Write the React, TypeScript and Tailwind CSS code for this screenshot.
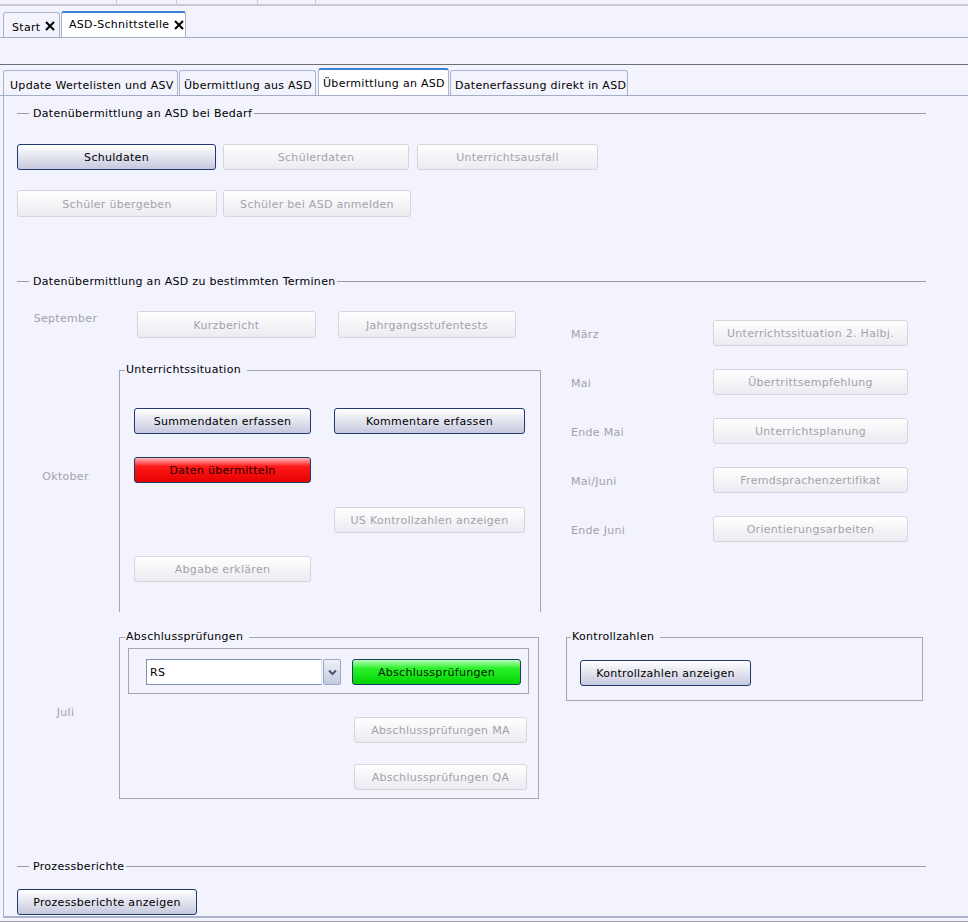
import React from 'react';

type Kind = 'active' | 'disabled' | 'red' | 'green';

const kinds: Record<Kind, string> = {
  active: 'border-[#1c3a6a] bg-linear-to-b from-[#ffffff] to-[#c6c9de] text-black',
  disabled: 'border-[#d4d5dd] bg-linear-to-b from-[#ffffff] to-[#ebebf1] text-[#a3a3aa]',
  red: 'border-[#1c3a6a] bg-[linear-gradient(#ffb8b8,#ff1a1a_35%,#e60000)] text-[#1a0000]',
  green: 'border-[#1c3a6a] bg-[linear-gradient(#b8ffb8,#2bf02b_35%,#00d400)] text-[#001a00]',
};

function Btn({ label, kind = 'disabled', className = '' }: { label: string; kind?: Kind; className?: string }) {
  return (
    <div
      className={`flex shrink-0 items-center justify-center rounded-[3px] border pt-[2px] ${kinds[kind]} ${className}`}
    >
      {label}
    </div>
  );
}

function CloseX() {
  return (
    <svg width="10" height="10" viewBox="0 0 10 10" className="shrink-0">
      <path d="M1 1 L9 9 M9 1 L1 9" stroke="#000" strokeWidth="2" />
    </svg>
  );
}

function Section({ title }: { title: string }) {
  return (
    <div className="flex h-[14px] items-center">
      <div className="h-px w-[12px] bg-[#9c9ca6]" />
      <span className="ml-[4px] mr-[2px] pt-[2px] text-black">{title}</span>
      <div className="h-px flex-1 bg-[#9c9ca6]" />
    </div>
  );
}

function Legend({ title }: { title: string }) {
  return (
    <div className="-mt-[8px] ml-[5px] w-fit bg-[#f2f3fd] pl-[1px] pr-[6px] leading-[14px] text-black">
      {title}
    </div>
  );
}

const months = [
  { m: 'März', b: 'Unterrichtssituation 2. Halbj.' },
  { m: 'Mai', b: 'Übertrittsempfehlung' },
  { m: 'Ende Mai', b: 'Unterrichtsplanung' },
  { m: 'Mai/Juni', b: 'Fremdsprachenzertifikat' },
  { m: 'Ende Juni', b: 'Orientierungsarbeiten' },
];

export default function App() {
  return (
    <div className="h-[922px] w-[968px] overflow-hidden bg-[#f2f3fd] font-['DejaVu_Sans',sans-serif] text-[11px] leading-[14px] tracking-[0.3px] text-black">
      {/* top strip */}
      <div className="flex h-[6px] border-b-2 border-[#c8c9d2]">
        <div className="w-[117px] border-r border-[#c8c9d2]" />
        <div className="w-[60px] border-r border-[#c8c9d2]" />
        <div className="w-[81px] border-r border-[#c8c9d2]" />
        <div className="w-[58px] border-r border-[#c8c9d2]" />
      </div>

      {/* outer tabs */}
      <div className="flex h-[32px] items-end border-b border-[#a3aec6] pl-[3px]">
        <div className="flex h-[25px] w-[57px] items-center gap-[5px] rounded-t-[3px] border border-b-0 border-[#a9b4cc] pl-[8px] pt-[5px]">
          <span>Start</span>
          <span className="-mt-[3px]">
            <CloseX />
          </span>
        </div>
        <div className="ml-[1px] flex h-[26px] w-[125px] items-center gap-[5px] rounded-t-[3px] border border-b-0 border-t-2 border-[#a9b4cc] border-t-[#3c7fd8] bg-white pb-[1px] pl-[7px]">
          <span>ASD-Schnittstelle</span>
          <CloseX />
        </div>
      </div>

      <div className="h-[27px] border-b border-[#6f6f79]" />

      {/* inner tabs */}
      <div className="flex h-[31px] items-end border-b border-[#a3aec6]">
        <div className="ml-[3px] flex h-[25px] w-[175px] items-center rounded-t-[3px] border border-b-0 border-[#a9b4cc] pl-[6px] pt-[5px]">
          Update Wertelisten und ASV
        </div>
        <div className="ml-[1px] flex h-[25px] w-[137px] items-center rounded-t-[3px] border border-b-0 border-[#a9b4cc] pl-[4px] pt-[5px]">
          Übermittlung aus ASD
        </div>
        <div className="ml-[2px] flex h-[27px] w-[131px] items-center rounded-t-[3px] border border-b-0 border-t-2 border-[#a9b4cc] border-t-[#3c7fd8] bg-white pl-[4px] pt-[2px]">
          Übermittlung an ASD
        </div>
        <div className="ml-[1px] flex h-[25px] w-[178px] items-center rounded-t-[3px] border border-b-0 border-[#a9b4cc] pl-[4px] pt-[5px]">
          Datenerfassung direkt in ASD
        </div>
      </div>

      {/* panel */}
      <div className="ml-[3px] h-[822px] border-b-2 border-l border-[#a9b4cc] pl-[13px] pr-[42px] pt-[10px]">
        <Section title="Datenübermittlung an ASD bei Bedarf" />

        <div className="mt-[24px] flex">
          <Btn label="Schuldaten" kind="active" className="h-[26px] w-[199px]" />
          <Btn label="Schülerdaten" className="ml-[7px] h-[26px] w-[186px]" />
          <Btn label="Unterrichtsausfall" className="ml-[8px] h-[26px] w-[181px]" />
        </div>
        <div className="mt-[20px] flex">
          <Btn label="Schüler übergeben" className="h-[27px] w-[200px]" />
          <Btn label="Schüler bei ASD anmelden" className="ml-[6px] h-[27px] w-[188px]" />
        </div>

        <div className="mt-[57px]">
          <Section title="Datenübermittlung an ASD zu bestimmten Terminen" />
        </div>

        <div className="mt-[23px] grid grid-cols-[524px_360px] gap-x-[25px]">
          {/* left, row A */}
          <div className="flex flex-col">
            <div className="flex items-start">
              <div className="w-[97px] pt-[1px] text-center text-[#a2a2aa]">September</div>
              <Btn label="Kurzbericht" className="ml-[23px] h-[27px] w-[179px]" />
              <Btn label="Jahrgangsstufentests" className="ml-[22px] h-[27px] w-[178px]" />
            </div>
            <div className="mt-[25px] flex items-start">
              <div className="w-[97px] pt-[107px] text-center text-[#a2a2aa]">Oktober</div>
              <div className="ml-[5px] mt-[7px] h-[242px] w-[422px] border border-b-0 border-[#a6a6b0]">
                <Legend title="Unterrichtssituation" />
                <div className="mt-[31px] flex">
                  <Btn label="Summendaten erfassen" kind="active" className="ml-[14px] h-[26px] w-[177px]" />
                  <Btn label="Kommentare erfassen" kind="active" className="ml-[23px] h-[26px] w-[191px]" />
                </div>
                <div className="mt-[23px] flex">
                  <Btn label="Daten übermitteln" kind="red" className="ml-[14px] h-[26px] w-[177px]" />
                </div>
                <div className="mt-[24px] flex">
                  <Btn label="US Kontrollzahlen anzeigen" className="ml-[214px] h-[26px] w-[191px]" />
                </div>
                <div className="mt-[23px] flex">
                  <Btn label="Abgabe erklären" className="ml-[14px] h-[26px] w-[177px]" />
                </div>
              </div>
            </div>
          </div>

          {/* right, row A */}
          <div className="mt-[9px] flex flex-col gap-[23px]">
            {months.map((r) => (
              <div key={r.m} className="flex h-[26px] items-center">
                <div className="w-[147px] pl-[5px] pt-[4px] text-[#a2a2aa]">{r.m}</div>
                <Btn label={r.b} className="h-[26px] w-[195px]" />
              </div>
            ))}
          </div>

          {/* left, row B */}
          <div className="mt-[18px] flex items-start">
            <div className="w-[97px] pt-[76px] text-center text-[#a2a2aa]">Juli</div>
            <div className="ml-[5px] mt-[7px] h-[162px] w-[420px] border border-[#a6a6b0]">
              <Legend title="Abschlussprüfungen" />
              <div className="ml-[8px] mt-[4px] flex h-[46px] w-[401px] border border-[#a6a6b0] pl-[17px] pt-[10px]">
                <div className="flex h-[26px] w-[176px] items-center border border-[#7f92b4] border-r-[#dfe3ee] bg-white pl-[3px] pt-[1px]">
                  RS
                </div>
                <div className="ml-[1px] flex h-[26px] w-[18px] items-center justify-center rounded-[2px] border border-[#9aa8c4] bg-linear-to-b from-[#eef1f9] to-[#c3cadf]">
                  <svg width="9" height="7" viewBox="0 0 9 7">
                    <path d="M1 1.5 L4.5 5 L8 1.5" stroke="#45587a" strokeWidth="2" fill="none" />
                  </svg>
                </div>
                <Btn label="Abschlussprüfungen" kind="green" className="ml-[11px] h-[26px] w-[169px]" />
              </div>
              <div className="mt-[23px] flex">
                <Btn label="Abschlussprüfungen MA" className="ml-[234px] h-[26px] w-[173px]" />
              </div>
              <div className="mt-[21px] flex">
                <Btn label="Abschlussprüfungen QA" className="ml-[234px] h-[26px] w-[173px]" />
              </div>
            </div>
          </div>

          {/* right, row B */}
          <div className="mt-[18px]">
            <div className="mt-[7px] h-[64px] w-[357px] border border-[#a6a6b0]">
              <div className="-mt-[8px] ml-[4px] w-fit bg-[#f2f3fd] pl-[1px] pr-[6px] leading-[14px] text-black">
                Kontrollzahlen
              </div>
              <div className="mt-[16px] flex">
                <Btn label="Kontrollzahlen anzeigen" kind="active" className="ml-[13px] h-[26px] w-[171px]" />
              </div>
            </div>
          </div>
        </div>

        <div className="mt-[60px]">
          <Section title="Prozessberichte" />
        </div>
        <div className="mt-[16px] flex">
          <Btn label="Prozessberichte anzeigen" kind="active" className="h-[26px] w-[180px]" />
        </div>
      </div>
      <div className="mt-[3px] border-t border-[#a0a0aa]" />
    </div>
  );
}
